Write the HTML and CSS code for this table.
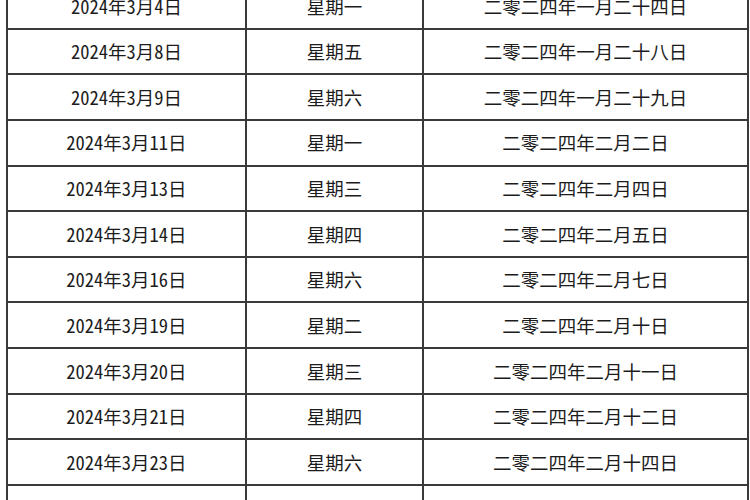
FILE: index.html
```html
<!DOCTYPE html>
<html lang="zh">
<head>
<meta charset="utf-8">
<link rel="stylesheet" href="styles.css">
</head>
<body>
<div class="sheet">
  <div class="row"><div class="cell">2024年3月4日</div><div class="cell">星期一</div><div class="cell">二零二四年一月二十四日</div></div>
  <div class="row"><div class="cell">2024年3月8日</div><div class="cell">星期五</div><div class="cell">二零二四年一月二十八日</div></div>
  <div class="row"><div class="cell">2024年3月9日</div><div class="cell">星期六</div><div class="cell">二零二四年一月二十九日</div></div>
  <div class="row"><div class="cell">2024年3月11日</div><div class="cell">星期一</div><div class="cell">二零二四年二月二日</div></div>
  <div class="row"><div class="cell">2024年3月13日</div><div class="cell">星期三</div><div class="cell">二零二四年二月四日</div></div>
  <div class="row"><div class="cell">2024年3月14日</div><div class="cell">星期四</div><div class="cell">二零二四年二月五日</div></div>
  <div class="row"><div class="cell">2024年3月16日</div><div class="cell">星期六</div><div class="cell">二零二四年二月七日</div></div>
  <div class="row"><div class="cell">2024年3月19日</div><div class="cell">星期二</div><div class="cell">二零二四年二月十日</div></div>
  <div class="row"><div class="cell">2024年3月20日</div><div class="cell">星期三</div><div class="cell">二零二四年二月十一日</div></div>
  <div class="row"><div class="cell">2024年3月21日</div><div class="cell">星期四</div><div class="cell">二零二四年二月十二日</div></div>
  <div class="row"><div class="cell">2024年3月23日</div><div class="cell">星期六</div><div class="cell">二零二四年二月十四日</div></div>
  <div class="row"><div class="cell">2024年3月24日</div><div class="cell">星期日</div><div class="cell">二零二四年二月十五日</div></div>
</div>
</body>
</html>
```
FILE: styles.css
```css
html, body {
  margin: 0;
  padding: 0;
  background: #fff;
  overflow: hidden;
}
body {
  width: 750px;
  height: 500px;
}
.sheet {
  margin: -16px 0 0 6px;
  width: 741px;
  border-left: 2px solid #3a3a3a;
  font-family: "Noto Sans CJK SC", sans-serif;
  font-feature-settings: "hwid" 1;
  font-size: 18.5px;
  color: #1c1c1c;
}
.row {
  display: grid;
  grid-template-columns: 239px 177px 1fr;
  height: 45.65px;
  box-sizing: border-box;
  border-bottom: 2px solid #3a3a3a;
}
.cell {
  display: flex;
  align-items: center;
  justify-content: center;
  border-right: 2px solid #3a3a3a;
  white-space: nowrap;
  line-height: 1;
}
```
